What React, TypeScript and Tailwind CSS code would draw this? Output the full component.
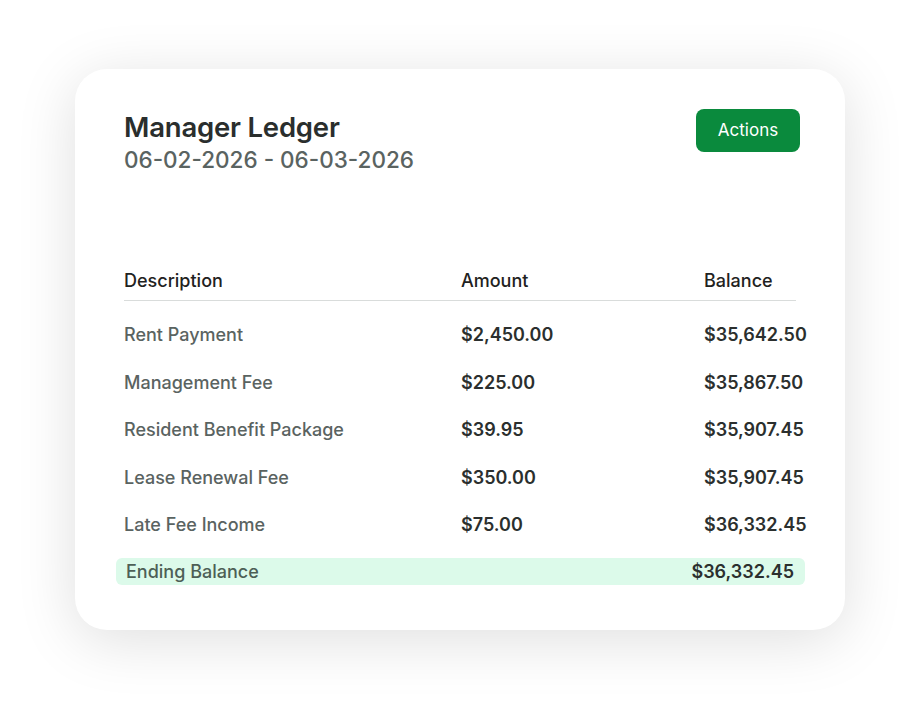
const rows = [
  { desc: "Rent Payment", amount: "$2,450.00", balance: "$35,642.50" },
  { desc: "Management Fee", amount: "$225.00", balance: "$35,867.50" },
  { desc: "Resident Benefit Package", amount: "$39.95", balance: "$35,907.45" },
  { desc: "Lease Renewal Fee", amount: "$350.00", balance: "$35,907.45" },
  { desc: "Late Fee Income", amount: "$75.00", balance: "$36,332.45" },
];

export default function App() {
  return (
    <div className="w-[920px] h-[711px] bg-white flex items-start justify-center pt-[69px] font-['Inter',sans-serif]">
      <div className="w-[770px] h-[561px] bg-white rounded-[32px] shadow-[0_10px_60px_rgba(0,0,0,0.13)] pl-[49px] pr-[45px] pt-[41px]">
        {/* Header */}
        <div className="flex justify-between items-start">
          <div>
            <h1 className="text-[27.5px] leading-[34px] font-semibold text-[#2a2e2d] tracking-[-0.2px]">
              Manager Ledger
            </h1>
            <p className="text-[22.5px] leading-[32px] font-medium text-[#5a6361]">
              06-02-2026 - 06-03-2026
            </p>
          </div>
          <button className="mt-[-1px] w-[104px] h-[43px] rounded-[8px] bg-[#0a8a3d] text-white text-[17px] leading-none">
            Actions
          </button>
        </div>

        {/* Table */}
        <div className="mt-[85px] w-[672px]">
          <div className="grid grid-cols-[337px_243px_1fr] h-[40px] items-center border-b border-[#d9dcdb] text-[18px] font-medium text-[#1f2221]">
            <span>Description</span>
            <span>Amount</span>
            <span>Balance</span>
          </div>
          <div className="pt-[10px]">
            {rows.map((r) => (
              <div
                key={r.desc}
                className="grid grid-cols-[337px_243px_1fr] h-[47.5px] items-center text-[18px] whitespace-nowrap"
              >
                <span className="font-medium text-[#5a6361]">{r.desc}</span>
                <span className="font-semibold text-[#2b2f2e]">{r.amount}</span>
                <span className="font-semibold text-[#2b2f2e]">{r.balance}</span>
              </div>
            ))}
          </div>
          <div className="ml-[-8px] mt-[9px] w-[689px] h-[27px] rounded-[6px] bg-[#dcfaea] flex items-center justify-between pl-[10px] pr-[11px] text-[18px]">
            <span className="font-medium text-[#4d5f56]">Ending Balance</span>
            <span className="font-semibold text-[#2b2f2e]">$36,332.45</span>
          </div>
        </div>
      </div>
    </div>
  );
}
